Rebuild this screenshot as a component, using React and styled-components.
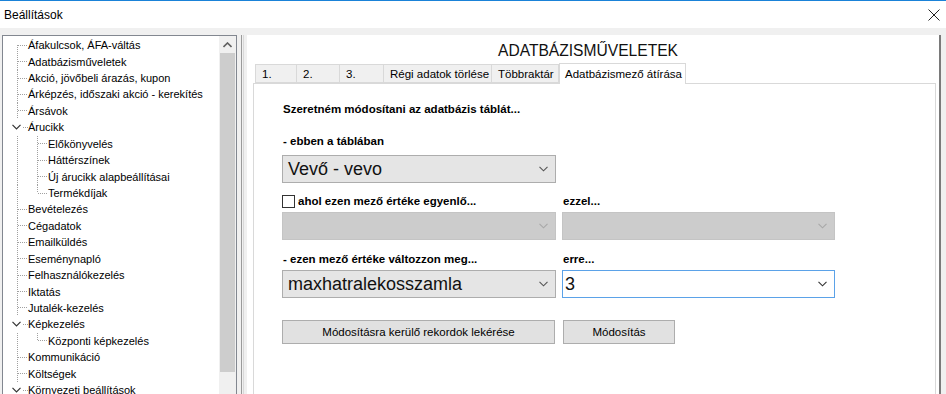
import React from "react";
import styled, { createGlobalStyle } from "styled-components";

const GlobalStyle = createGlobalStyle`
  html, body { margin: 0; padding: 0; }
  body {
    width: 946px;
    height: 394px;
    overflow: hidden;
    background: #f0f0f0;
    font-family: "Liberation Sans", Arial, sans-serif;
    font-size: 12px;
    color: #000;
  }
`;

const Window = styled.div`
  width: 946px;
  height: 394px;
  display: flex;
  flex-direction: column;
  background: #f0f0f0;
  overflow: hidden;
`;

const TitleBar = styled.div`
  height: 27px;
  border-top: 1px solid #1a82d8;
  background: #fff;
  display: flex;
  align-items: center;
  justify-content: space-between;
  padding: 0 6px 0 4px;
  font-size: 12px;
`;

const Body = styled.div`
  flex: 1;
  display: flex;
  padding: 7px 0 0 2px;
  min-height: 0;
`;

/* ---------- tree ---------- */

const TreePanel = styled.div`
  width: 233px;
  border: 1px solid #828790;
  border-bottom: none;
  background: #fff;
  display: flex;
  overflow: hidden;
`;

const TreeList = styled.div`
  flex: 1;
  padding-top: 1px;
  overflow: hidden;
`;

const TreeRow = styled.div`
  height: 16.43px;
  display: flex;
  align-items: center;
  white-space: nowrap;
  font-size: 11px;
`;

const dotV = "repeating-linear-gradient(to bottom, #a0a0a0 0 1px, transparent 1px 2px)";
const dotH = "repeating-linear-gradient(to right, #a0a0a0 0 1px, transparent 1px 2px)";

const Guide = styled.span`
  flex: none;
  align-self: stretch;
  width: ${p => p.$w}px;
  display: flex;
  align-items: center;
  background-image: ${p => [p.$v && dotV, p.$h && dotH].filter(Boolean).join(", ") || "none"};
  background-repeat: no-repeat;
  background-size: ${p => [p.$v && `1px ${p.$v === "full" ? "100%" : "50%"}`, p.$h && `${p.$h}px 1px`].filter(Boolean).join(", ")};
  background-position: ${p => [p.$v && `14px ${p.$v === "bottom" ? "100%" : "0"}`, p.$h && `${p.$hx || 15}px 50%`].filter(Boolean).join(", ")};
`;

const Chevron = styled.svg`
  margin-left: 9px;
  width: 9px;
  height: 6px;
`;

const ScrollBar = styled.div`
  width: 17px;
  display: flex;
  flex-direction: column;
  align-items: center;
  background: #f0f0f0;
`;

const ScrollArrow = styled.div`
  height: 17px;
  width: 17px;
  display: flex;
  align-items: center;
  justify-content: center;
`;

const ScrollThumb = styled.div`
  width: 15px;
  height: 319px;
  background: #cdcdcd;
`;

/* ---------- splitter ---------- */

const Splitter = styled.div`
  width: 10px;
  display: flex;
  justify-content: center;
`;

const SplitLine = styled.div`
  width: 1px;
  border-left: 1px solid #9a9a9a;
  border-right: 1px solid #d8d8d8;
`;

/* ---------- right side ---------- */

const MainPanel = styled.div`
  width: 694px;
  background: #fff;
  border-right: 2px solid #7a7a7a;
  display: flex;
  flex-direction: column;
  padding-left: 6px;
  box-sizing: border-box;
`;

const PageTitle = styled.div`
  text-align: center;
  font-size: 15.6px;
  padding: 6px 20px 0 0;
  height: 21px;
  line-height: 20px;
  color: #111;
  margin-left: 4px;
`;

const TabStrip = styled.div`
  display: flex;
  align-items: flex-end;
  height: 21px;
  padding-left: 2px;
`;

const Tab = styled.div`
  width: ${p => p.$w}px;
  height: ${p => (p.$active ? 21 : 19)}px;
  box-sizing: border-box;
  border: 1px solid #d9d9d9;
  border-left: ${p => (p.$first || p.$active ? "1px solid #d9d9d9" : "none")};
  border-bottom: ${p => (p.$active ? "none" : "1px solid #d9d9d9")};
  background: ${p => (p.$active ? "#fff" : "#f0f0f0")};
  padding: 0 0 0 ${p => (p.$active ? 5 : 6)}px;
  display: flex;
  align-items: center;
  font-size: 11.5px;
  white-space: nowrap;
  margin-bottom: ${p => (p.$active ? "-1px" : "0")};
  position: relative;
`;

const TabPage = styled.div`
  flex: 1;
  border: 1px solid #d9d9d9;
  border-bottom: none;
  margin-right: 3px;
  padding: 17px 0 0 28px;
`;

const Heading = styled.div`
  font-weight: bold;
  font-size: 11.5px;
  height: 16px;
  line-height: 16px;
  margin-left: 1px;
  margin-bottom: ${p => p.$mb || 0}px;
`;

const FieldGrid = styled.div`
  display: grid;
  grid-template-columns: 274px 273px;
  column-gap: 6px;
  align-items: end;
`;

const CheckLabel = styled.label`
  display: flex;
  align-items: center;
  gap: 3px;
  font-weight: bold;
  font-size: 11.5px;
  height: 16px;
`;

const CheckBox = styled.span`
  width: 11px;
  height: 11px;
  border: 1px solid #333;
  background: #fff;
`;

const Combo = styled.div`
  height: 28px;
  box-sizing: border-box;
  border: 1px solid ${p => (p.$focus ? "#5ba2e8" : p.$disabled ? "#c4c4c4" : "#adadad")};
  background: ${p => (p.$focus ? "#fff" : p.$disabled ? "#cccccc" : "#e5e5e5")};
  display: flex;
  align-items: center;
  justify-content: space-between;
  padding: 0 7px 0 ${p => (p.$focus ? 2 : 5)}px;
  font-size: 18px;
  color: #111;
  margin-top: ${p => p.$mt || 0}px;
`;

const Button = styled.div`
  height: 24px;
  width: ${p => p.$w}px;
  box-sizing: border-box;
  border: 1px solid #adadad;
  background: #e1e1e1;
  display: flex;
  align-items: center;
  justify-content: center;
  font-size: 11.5px;
`;

const ButtonRow = styled.div`
  display: flex;
  gap: 8px;
  margin-top: 22px;
`;

const Arrow = ({ color = "#555" }) => (
  <svg width="9" height="6" viewBox="0 0 9 6">
    <path d="M0.5 0.8 L4.5 4.8 L8.5 0.8" fill="none" stroke={color} strokeWidth="1.1" />
  </svg>
);

const tree = [
  { t: "Áfakulcsok, ÁFA-váltás", first: true },
  { t: "Adatbázisműveletek" },
  { t: "Akció, jövőbeli árazás, kupon" },
  { t: "Árképzés, időszaki akció - kerekítés" },
  { t: "Ársávok" },
  { t: "Árucikk", exp: true },
  { t: "Előkönyvelés", lvl: 2 },
  { t: "Háttérszínek", lvl: 2 },
  { t: "Új árucikk alapbeállításai", lvl: 2 },
  { t: "Termékdíjak", lvl: 2, last: true },
  { t: "Bevételezés" },
  { t: "Cégadatok" },
  { t: "Emailküldés" },
  { t: "Eseménynapló" },
  { t: "Felhasználókezelés" },
  { t: "Iktatás" },
  { t: "Jutalék-kezelés" },
  { t: "Képkezelés", exp: true },
  { t: "Központi képkezelés", lvl: 2, last: true },
  { t: "Kommunikáció" },
  { t: "Költségek" },
  { t: "Környezeti beállítások", exp: true },
];

function TreeItem({ item }) {
  if (item.lvl === 2) {
    return (
      <TreeRow>
        <Guide $w={20} $v="full" />
        <Guide $w={25} $v={item.last ? "top" : "full"} $h={9} />
        {item.t}
      </TreeRow>
    );
  }
  if (item.exp) {
    return (
      <TreeRow>
        <Guide $w={25} $h={6} $hx={20}>
          <Chevron viewBox="0 0 9 6">
            <path d="M0.5 0.8 L4.5 4.8 L8.5 0.8" fill="none" stroke="#333" strokeWidth="1.2" />
          </Chevron>
        </Guide>
        {item.t}
      </TreeRow>
    );
  }
  return (
    <TreeRow>
      <Guide $w={25} $v={item.first ? "bottom" : "full"} $h={10} />
      {item.t}
    </TreeRow>
  );
}

const tabs = [
  { t: "1.", w: 42 },
  { t: "2.", w: 43 },
  { t: "3.", w: 44 },
  { t: "Régi adatok törlése", w: 108 },
  { t: "Többraktár", w: 67 },
  { t: "Adatbázismező átírása", w: 127, active: true },
];

export default function App() {
  return (
    <Window>
      <GlobalStyle />
      <TitleBar>
        <span>Beállítások</span>
        <svg width="12" height="12" viewBox="0 0 12 12">
          <path d="M0.5 0.5 L11.5 11.5 M11.5 0.5 L0.5 11.5" stroke="#222" strokeWidth="1" />
        </svg>
      </TitleBar>
      <Body>
        <TreePanel>
          <TreeList>
            {tree.map((item, i) => (
              <TreeItem key={i} item={item} />
            ))}
          </TreeList>
          <ScrollBar>
            <ScrollArrow>
              <svg width="9" height="6" viewBox="0 0 9 6">
                <path d="M0.5 5 L4.5 1 L8.5 5" fill="none" stroke="#606060" strokeWidth="1.6" />
              </svg>
            </ScrollArrow>
            <ScrollThumb />
          </ScrollBar>
        </TreePanel>
        <Splitter>
          <SplitLine />
        </Splitter>
        <MainPanel>
          <PageTitle>ADATBÁZISMŰVELETEK</PageTitle>
          <TabStrip>
            {tabs.map((tb, i) => (
              <Tab key={i} $w={tb.w} $active={tb.active} $first={i === 0}>
                {tb.t}
              </Tab>
            ))}
          </TabStrip>
          <TabPage>
            <Heading $mb={16}>Szeretném módosítani az adatbázis táblát...</Heading>
            <Heading $mb={0}>- ebben a táblában</Heading>
            <FieldGrid>
              <Combo $mt={6}>
                Vevő - vevo
                <Arrow />
              </Combo>
              <div />
              <CheckLabel style={{ marginTop: 10 }}>
                <CheckBox />
                ahol ezen mező értéke egyenlő...
              </CheckLabel>
              <Heading>ezzel...</Heading>
              <Combo $disabled $mt={3}>
                <span />
                <Arrow color="#a8a8a8" />
              </Combo>
              <Combo $disabled $mt={3}>
                <span />
                <Arrow color="#a8a8a8" />
              </Combo>
              <Heading style={{ marginTop: 11 }}>- ezen mező értéke változzon meg...</Heading>
              <Heading>erre...</Heading>
              <Combo $mt={3}>
                maxhatralekosszamla
                <Arrow />
              </Combo>
              <Combo $mt={3} $focus>
                3
                <Arrow color="#333" />
              </Combo>
            </FieldGrid>
            <ButtonRow>
              <Button $w={273}>Módosításra kerülő rekordok lekérése</Button>
              <Button $w={112}>Módosítás</Button>
            </ButtonRow>
          </TabPage>
        </MainPanel>
      </Body>
    </Window>
  );
}
